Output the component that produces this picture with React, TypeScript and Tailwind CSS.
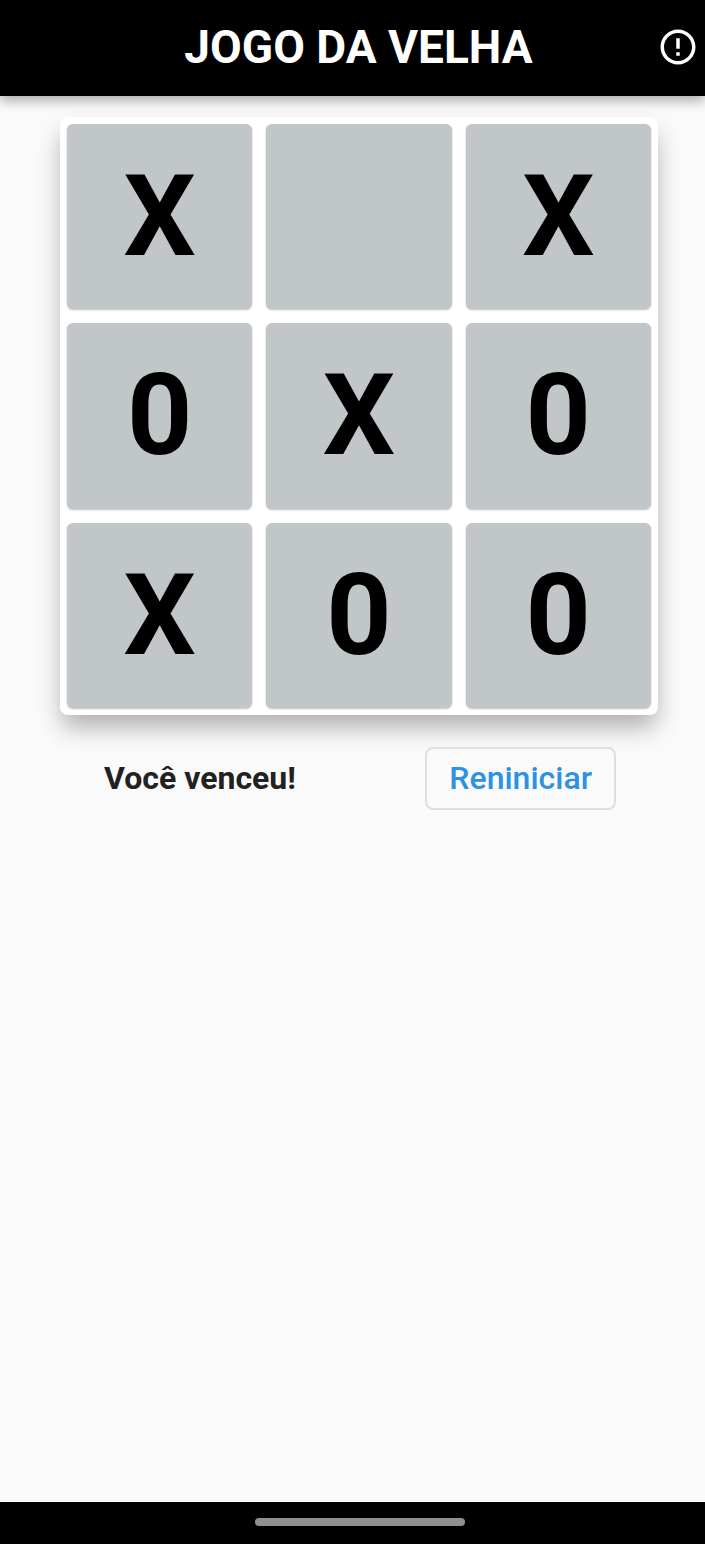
import React, { useState } from 'react';
import { MdErrorOutline } from 'react-icons/md';

type Mark = 'X' | '0' | '';

const FINISHED_GAME: Mark[] = ['X', '', 'X', '0', 'X', '0', 'X', '0', '0'];

const LINES = [
  [0, 1, 2], [3, 4, 5], [6, 7, 8],
  [0, 3, 6], [1, 4, 7], [2, 5, 8],
  [0, 4, 8], [2, 4, 6],
];

const hasWon = (board: Mark[], mark: Mark) =>
  LINES.some(line => line.every(i => board[i] === mark));

const getStatus = (board: Mark[]) => {
  if (hasWon(board, 'X')) return 'Você venceu!';
  if (hasWon(board, '0')) return 'Você perdeu!';
  if (board.every(Boolean)) return 'Empate!';
  return '';
};

interface CellProps {
  mark: Mark;
  index: number;
  onPlay: (index: number) => void;
}

const Cell: React.FC<CellProps> = ({ mark, index, onPlay }) => (
  <button
    type="button"
    onClick={() => onPlay(index)}
    aria-label={mark ? undefined : `Casa ${index + 1}`}
    className="aspect-square pb-px rounded-md bg-[#c1c6c8] shadow-[0_1px_2px_rgba(0,0,0,0.25)] flex items-center justify-center text-[114px] leading-none font-bold text-black"
  >
    {mark}
  </button>
);

const App: React.FC = () => {
  const [board, setBoard] = useState<Mark[]>(FINISHED_GAME);
  const status = getStatus(board);

  const handlePlay = (index: number) => {
    if (board[index] || status) return;
    const next = [...board];
    next[index] = board.filter(Boolean).length % 2 === 0 ? 'X' : '0';
    setBoard(next);
  };

  const handleRestart = () => setBoard(Array<Mark>(9).fill(''));

  return (
    <div className="min-h-screen flex flex-col bg-[#fafafa] font-[Roboto,sans-serif]">
      <header className="h-24 pb-0.5 pr-1.5 bg-black text-white shadow-[0_4px_12px_rgba(0,0,0,0.35)] grid grid-cols-[60px_1fr_42px] items-center">
        <h1 className="col-start-2 text-center text-[46px] leading-none font-bold">JOGO DA VELHA</h1>
        <button type="button" aria-label="Sobre o jogo">
          <MdErrorOutline size={42} />
        </button>
      </header>

      <main className="flex-1 pt-[21px] pl-[60px] pr-[47px]">
        <div className="grid grid-cols-3 gap-[14px] p-[7px] bg-white rounded-lg shadow-[0_14px_24px_-2px_rgba(0,0,0,0.3)]">
          {board.map((mark, index) => (
            <Cell key={index} mark={mark} index={index} onPlay={handlePlay} />
          ))}
        </div>

        <div className="mt-8 pl-11 pr-[42px] flex items-center justify-between">
          <p role="status" className="text-[32px] leading-none font-bold text-[#212121]">{status}</p>
          <button
            type="button"
            onClick={handleRestart}
            className="h-[63px] px-[22px] rounded-lg border-2 border-[#dedede] text-[32px] leading-none font-medium text-[#2b93e2]"
          >
            Reniniciar
          </button>
        </div>
      </main>

      <footer className="h-[42px] pb-0.5 pl-[14px] bg-black flex items-center justify-center">
        <div className="w-[210px] h-2 rounded-full bg-[#8f8f8f]" />
      </footer>
    </div>
  );
};

export default App;
